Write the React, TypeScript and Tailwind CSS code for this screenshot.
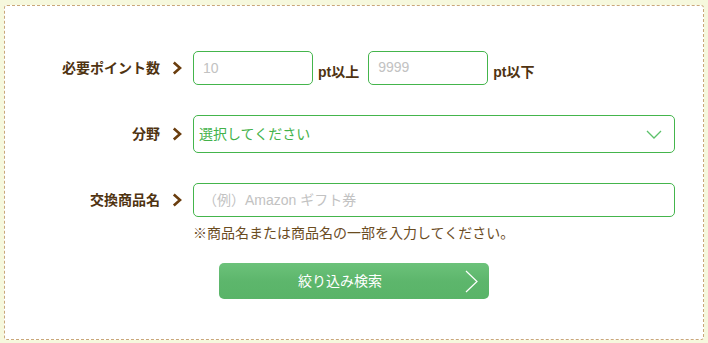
import React from "react"

const font = { fontFamily: '"Liberation Sans", "Noto Sans CJK JP", sans-serif' }

function Label({ text }: { text: string }) {
  return (
    <div className="flex w-[188px] shrink-0 items-center justify-end pr-[11px]">
      <span className="text-[14px] font-bold text-[#4f3311]">{text}</span>
      <svg className="ml-[12px]" width="10" height="14" viewBox="0 0 10 14">
        <path d="M1.8 1.5 L8 7 L1.8 12.5" fill="none" stroke="#6a3d0e" strokeWidth="2.6" />
      </svg>
    </div>
  )
}

export default function App() {
  return (
    <div className="h-[343px] w-[708px] bg-[#f6f8dd] pl-[4px] pt-[5px]" style={font}>
      <div className="flex h-[335px] w-[700px] flex-col rounded-[3px] border border-dashed border-[#c9a77a] bg-white pt-[45px]">
        {/* Points */}
        <div className="flex h-[34px] items-center">
          <Label text="必要ポイント数" />
          <input
            placeholder="10"
            className="h-[34px] w-[120px] rounded-[5px] border border-[#44b54c] px-[9px] text-[14px] outline-none placeholder:text-[#c2c2c2]"
          />
          <span className="ml-[5px] mr-[9px] self-end pb-[2px] text-[14px] font-bold text-[#4f3311]">pt以上</span>
          <input
            placeholder="9999"
            className="h-[34px] w-[120px] rounded-[5px] border border-[#44b54c] px-[9px] pb-[3px] text-[14px] outline-none placeholder:text-[#c2c2c2]"
          />
          <span className="ml-[5px] self-end pb-[2px] text-[14px] font-bold text-[#4f3311]">pt以下</span>
        </div>

        {/* Category */}
        <div className="mt-[30px] flex h-[38px] items-center">
          <Label text="分野" />
          <div className="flex h-[38px] w-[482px] items-center justify-between rounded-[5px] border border-[#44b54c] pl-[5px] pr-[12px]">
            <span className="text-[14px] text-[#43b24a]">選択してください</span>
            <svg width="16" height="9" viewBox="0 0 16 9">
              <path d="M1 1 L8 8 L15 1" fill="none" stroke="#5cc16a" strokeWidth="1.3" />
            </svg>
          </div>
        </div>

        {/* Item name */}
        <div className="mt-[30px] flex h-[34px] items-center">
          <Label text="交換商品名" />
          <input
            placeholder="（例）Amazon ギフト券"
            className="h-[34px] w-[482px] rounded-[5px] border border-[#44b54c] px-[9px] text-[14px] outline-none placeholder:text-[#c2c2c2]"
          />
        </div>
        <p className="ml-[188px] mt-[7px] text-[14px] leading-[18px] text-[#6b4c1f]">
          ※商品名または商品名の一部を入力してください。
        </p>

        {/* Submit */}
        <button className="relative ml-[214px] mt-[21px] flex h-[36px] w-[270px] items-center justify-center rounded-[5px] bg-gradient-to-b from-[#6cc27a] via-[#5db66c] to-[#59b468] pr-[28px] text-[14px] text-white">
          絞り込み検索
          <svg className="absolute right-[11px] top-[7px]" width="13" height="23" viewBox="0 0 13 23">
            <path d="M1 1 L12 11.5 L1 22" fill="none" stroke="#ffffff" strokeWidth="1.2" />
          </svg>
        </button>
      </div>
    </div>
  )
}
